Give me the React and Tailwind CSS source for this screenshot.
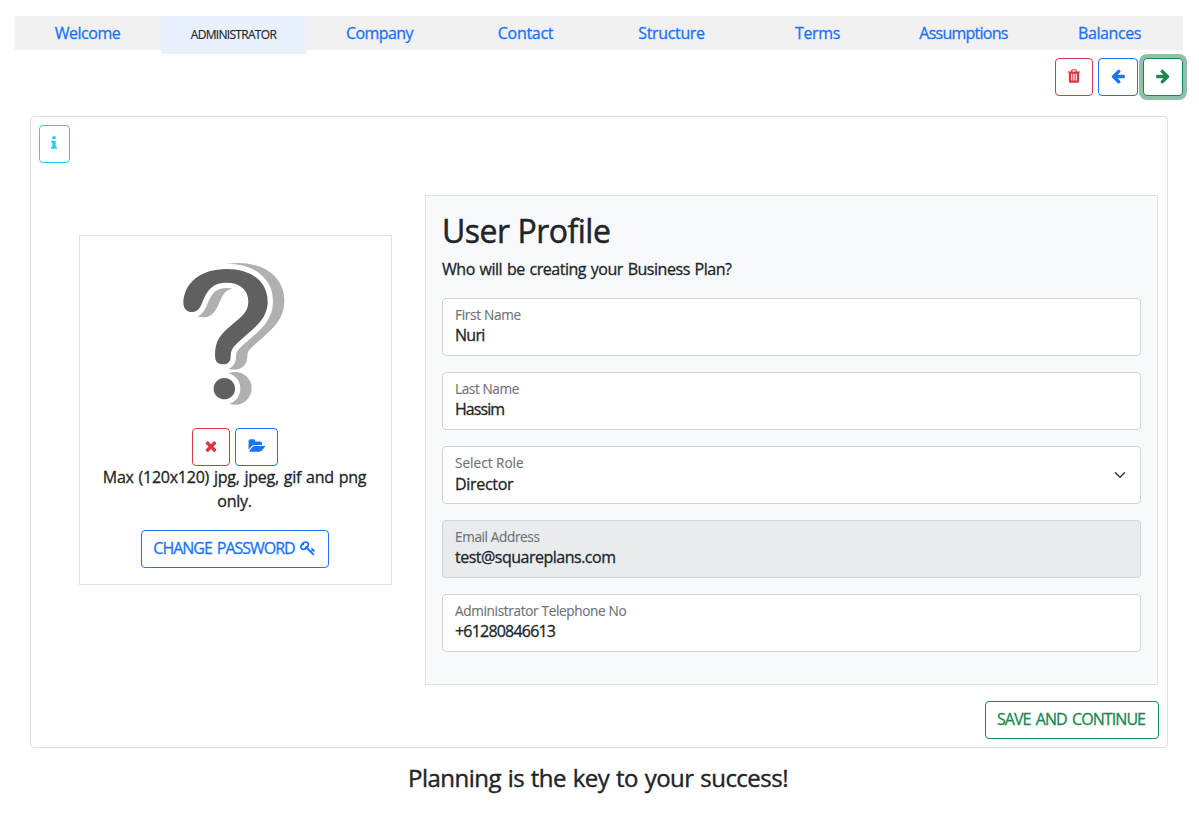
const paths = {
  times: "M1490 1322q0 40-28 68l-136 136q-28 28-68 28t-68-28l-294-294-294 294q-28 28-68 28t-68-28l-136-136q-28-28-28-68t28-68l294-294-294-294q-28-28-28-68t28-68l136-136q28-28 68-28t68 28l294 294 294-294q28-28 68-28t68 28l136 136q28 28 28 68t-28 68l-294 294 294 294q28 28 28 68z",
  arrow: "M1600 960q0 54-37 91l-651 651q-39 37-91 37-51 0-90-37l-75-75q-38-38-38-91t38-91l293-293H245q-52 0-84.5-37.5T128 1024V896q0-53 32.5-90.5T245 768h704L656 474q-38-36-38-90t38-90l75-75q38-38 90-38 53 0 91 38l651 651q37 35 37 90z",
  trash: "M704 1376V672q0-14-9-23t-23-9h-64q-14 0-23 9t-9 23v704q0 14 9 23t23 9h64q14 0 23-9t9-23zm256 0V672q0-14-9-23t-23-9h-64q-14 0-23 9t-9 23v704q0 14 9 23t23 9h64q14 0 23-9t9-23zm256 0V672q0-14-9-23t-23-9h-64q-14 0-23 9t-9 23v704q0 14 9 23t23 9h64q14 0 23-9t9-23zM672 384h448l-48-117q-7-9-17-11H738q-10 2-17 11zm928 32v64q0 14-9 23t-23 9h-96v948q0 83-47 143.5t-113 60.5H480q-66 0-113-58.5T320 1464V512h-96q-14 0-23-9t-9-23v-64q0-14 9-23t23-9h309l70-167q15-37 54-63t79-26h320q40 0 79 26t54 63l70 167h309q14 0 23 9t9 23z",
  folder: "M1943 952q0 31-31 66l-336 396q-43 51-120.5 86.5T1312 1536H224q-34 0-60.5-13t-26.5-43q0-31 31-66l336-396q43-51 120.5-86.5T768 896h1088q34 0 60.5 13t26.5 43zm-343-344v160H768q-94 0-197 47.5T407 934L70 1330l-5 6q0-4-.5-12.5T64 1311V352q0-92 66-158t158-66h320q92 0 158 66t66 158v32h544q92 0 158 66t66 158z",
  info: "M1216 1344v128q0 26-19 45t-45 19H640q-26 0-45-19t-19-45v-128q0-26 19-45t45-19h64V896h-64q-26 0-45-19t-19-45V704q0-26 19-45t45-19h384q26 0 45 19t19 45v576h64q26 0 45 19t19 45zm-128-1152v192q0 26-19 45t-45 19H768q-26 0-45-19t-19-45V192q0-26 19-45t45-19h256q26 0 45 19t19 45z",
  key: "M832 512q0-80-56-136t-136-56-136 56-56 136q0 42 19 83-41-19-83-19-80 0-136 56t-56 136 56 136 136 56 136-56 56-136q0-42-19-83 41 19 83 19 80 0 136-56t56-136zm851 704q0 17-49 66t-66 49q-9 0-28.5-16t-36.5-33-38.5-40-24.5-26l-96 96 220 220q28 28 28 68 0 42-39 81t-81 39q-40 0-68-28L733 1021q-176 131-365 131-163 0-265.5-102.5T0 784q0-160 95-313t248-248 313-95q163 0 265.5 102.5T1024 496q0 189-131 365l355 355 96-96q-3-3-26-24.5t-40-38.5-33-36.5-16-28.5q0-17 49-66t66-49q13 0 23 10 6 6 46 44.5t82 79.5 86.5 86 73 78 28.5 41z",
};

function Icon({ name, className = "size-4", box = "0 0 1792 1792" }) {
  return (
    <svg viewBox={box} fill="currentColor" className={className} aria-hidden="true">
      <path d={paths[name]} />
    </svg>
  );
}

function Button({ className, children, ...rest }) {
  return (
    <button
      className={`flex h-[38px] items-center justify-center rounded border border-current bg-white ${className}`}
      {...rest}
    >
      {children}
    </button>
  );
}

const mark =
  "M70 188C72 130 120 87 200 87C275 87 323 125 323 185C323 235 285 262 250 293C222 318 212 325 212 350C212 365 203 373 190 373C173 373 165 365 165 345C166 300 180 285 215 255C245 230 265 215 265 185C265 150 240 128 200 128C150 128 138 160 125 192C118 208 110 216 97 216C80 216 70 205 70 188Z";

function Placeholder() {
  return (
    <svg viewBox="0 0 450 540" className="h-[180px] w-[150px]" aria-hidden="true">
      <g fill="#b0b0b0" stroke="#b0b0b0" strokeWidth="34" strokeLinejoin="round">
        <path d={mark} transform="translate(33 -1)" />
        <circle cx="226" cy="445" r="32" />
      </g>
      <g fill="#fff" stroke="#fff" strokeWidth="32" strokeLinejoin="round">
        <path d={mark} />
        <circle cx="193" cy="446" r="32" />
      </g>
      <g fill="#606060">
        <path d={mark} />
        <circle cx="193" cy="446" r="32" />
      </g>
    </svg>
  );
}

const tabs = [
  ["Welcome", "tracking-[-0.45px]"],
  ["ADMINISTRATOR", ""],
  ["Company", "tracking-[-0.6px]"],
  ["Contact", "tracking-[-0.3px]"],
  ["Structure", "tracking-[-0.35px]"],
  ["Terms", "tracking-[-0.4px]"],
  ["Assumptions", "tracking-[-0.75px]"],
  ["Balances", "tracking-[-0.4px]"],
];

const fields = [
  { label: "First Name", value: "Nuri", track: "tracking-[-0.7px]", labelTrack: "tracking-[-0.3px]" },
  { label: "Last Name", value: "Hassim", track: "tracking-[-0.95px]", labelTrack: "tracking-[-0.4px]" },
  { label: "Select Role", value: "Director", track: "tracking-[-0.3px]", labelTrack: "tracking-[0px]", select: true },
  { label: "Email Address", value: "test@squareplans.com", track: "tracking-[-0.5px]", labelTrack: "tracking-[-0.38px]", disabled: true },
  { label: "Administrator Telephone No", value: "+61280846613", track: "tracking-[-0.8px]", labelTrack: "tracking-[-0.34px]" },
];

function Field({ label, value, track, labelTrack, select, disabled }) {
  return (
    <div
      className={`flex h-[58px] justify-between rounded border border-[#ced4da] px-3 ${
        disabled ? "bg-[#e9ecef]" : "bg-white"
      }`}
    >
      <div className="pt-[6px]">
        <div className={`text-[13.6px] leading-5 text-[#6f7275] [-webkit-text-stroke:0.15px_currentColor] ${labelTrack}`}>{label}</div>
        <div className={`leading-5 ${select ? "pt-px" : ""} ${track}`}>{value}</div>
      </div>
      {select && (
        <svg viewBox="0 0 16 16" className="mr-0.5 size-3 self-center" fill="none" stroke="#343a40" strokeWidth="2" strokeLinecap="round" strokeLinejoin="round">
          <path d="M2 5l6 6 6-6" />
        </svg>
      )}
    </div>
  );
}

export default function App() {
  return (
    <div className="h-[834px] w-[1199px] overflow-hidden bg-white pt-4 pl-[15px] font-['Open_Sans',sans-serif] text-base text-[#212529] [-webkit-text-stroke:0.3px_currentColor]">
      <nav className="flex h-[34px] w-[1168px] items-start bg-[#f1f1f1]">
        {tabs.map(([name, track]) =>
          name === "ADMINISTRATOR" ? (
            <div key={name} className="flex h-[38px] w-[146px] items-center justify-center bg-[#e9f1ff] pr-px text-xs tracking-[-0.7px] [-webkit-text-stroke:0.15px_currentColor]">
              {name}
            </div>
          ) : (
            <a key={name} className={`w-[146px] pr-px text-center leading-[34px] text-[#1a73f8] ${track}`}>
              {name}
            </a>
          )
        )}
      </nav>

      <div className="mt-2 flex w-[1168px] justify-end gap-[5px]">
        <Button className="w-[38px] text-[#dc3545]" aria-label="Delete"><Icon name="trash" className="size-4 -translate-y-px" /></Button>
        <Button className="w-10 text-[#1a73f8]" aria-label="Previous"><Icon name="arrow" className="size-4 -translate-y-px -scale-x-100" /></Button>
        <Button className="w-10 text-[#198754] ring-4 ring-[#8fc1a8]" aria-label="Next"><Icon name="arrow" className="size-4 -translate-y-px" /></Button>
      </div>

      <main className="mt-5 ml-[15px] h-[632px] w-[1138px] rounded border border-[#dfdfdf] p-2">
        <Button className="w-[31px] pr-px text-[#25cff2]" aria-label="Info"><Icon name="info" className="size-4 -translate-y-px" /></Button>
        <div className="mt-8 flex items-start">
          <section className="mt-10 ml-10 flex h-[350px] w-[313px] flex-col items-center border border-[#dee2e6] pt-1 pr-0.5">
            <Placeholder />
            <div className="mt-2 flex gap-[5px]">
              <Button className="w-[38px] text-[#dc3545]" aria-label="Remove"><Icon name="times" className="size-4 -translate-y-px" /></Button>
              <Button className="w-[43px] pl-px text-[#1a73f8]" aria-label="Browse"><Icon name="folder" box="0 0 2048 1792" className="h-4 w-[18px] -translate-y-px" /></Button>
            </div>
            <p className="-mt-px w-[280px] text-center leading-6 tracking-[-0.25px] [word-spacing:1px]">
              Max (120x120) jpg, jpeg, gif and png only.
            </p>
            <Button className="mt-[17px] w-[188px] gap-[5px] pb-0.5 text-[#1a73f8]">
              <span className="tracking-[-1.03px] whitespace-nowrap [word-spacing:2px]">CHANGE PASSWORD</span>
              <Icon name="key" />
            </Button>
          </section>
          <section className="ml-[33px] h-[490px] w-[733px] border border-[#dee2e6] bg-[#f8f9fb] p-4">
            <h1 className="text-[32px] leading-[38px] tracking-[-0.5px] [-webkit-text-stroke:0.5px_currentColor]">User Profile</h1>
            <p className="mt-[7px] leading-6 tracking-[-0.46px] [word-spacing:1px]">Who will be creating your Business Plan?</p>
            <div className="mt-[17px] flex flex-col gap-4">
              {fields.map((f) => (
                <Field key={f.label} {...f} />
              ))}
            </div>
          </section>
        </div>
        <div className="mt-4 flex justify-end">
          <Button className="w-[174px] pr-0.5 pb-0.5 tracking-[-0.92px] text-[#198754] [word-spacing:2px]">SAVE AND CONTINUE</Button>
        </div>
      </main>
      <p className="mt-[15px] w-[1166px] text-center text-2xl leading-[29px] tracking-[-0.52px] [-webkit-text-stroke:0.4px_currentColor] [word-spacing:1px]">Planning is the key to your success!</p>
    </div>
  );
}
